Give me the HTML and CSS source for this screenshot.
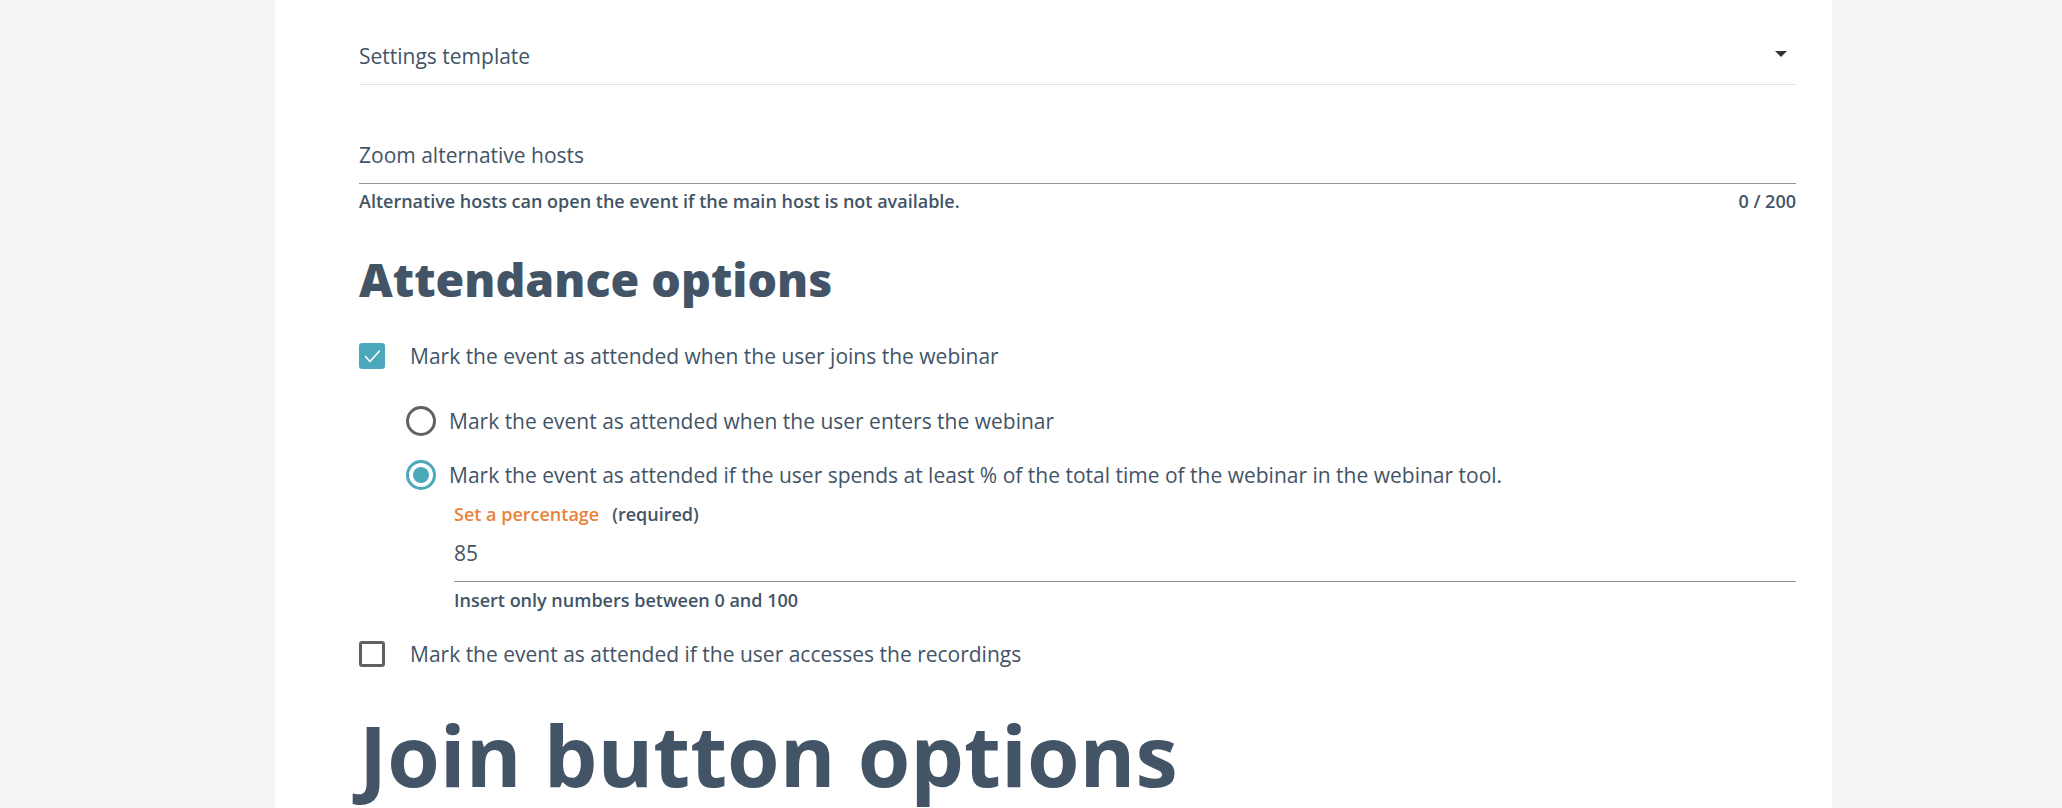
FILE: index.html
```html
<!DOCTYPE html>
<html lang="en">
<head>
<meta charset="utf-8">
<title>Attendance options</title>
<link rel="stylesheet" href="styles.css">
</head>
<body>
<div class="page">
  <main class="panel">
    <div class="select">
      <span>Settings template</span>
      <span class="caret"></span>
    </div>

    <div class="field">
      <div class="input">Zoom alternative hosts</div>
      <div class="hint">
        <span>Alternative hosts can open the event if the main host is not available.</span>
        <span>0 / 200</span>
      </div>
    </div>

    <h2 class="section-title">Attendance options</h2>

    <div class="check-row">
      <span class="checkbox checked">
        <svg viewBox="0 0 26 26" width="26" height="26"><polyline points="6.5,13.5 11,18.5 20.5,8" fill="none" stroke="#fff" stroke-width="1.6" stroke-linecap="round" stroke-linejoin="round"/></svg>
      </span>
      <span class="label">Mark the event as attended when the user joins the webinar</span>
    </div>

    <div class="radio-group">
      <div class="radio-row">
        <span class="radio"></span>
        <span class="label">Mark the event as attended when the user enters the webinar</span>
      </div>
      <div class="radio-row">
        <span class="radio on"></span>
        <span class="label">Mark the event as attended if the user spends at least % of the total time of the webinar in the webinar tool.</span>
      </div>
      <div class="pct">
        <div class="pct-label"><span class="accent">Set a percentage</span><span class="req">(required)</span></div>
        <div class="input pct-input">85</div>
        <div class="hint pct-hint"><span>Insert only numbers between 0 and 100</span></div>
      </div>
    </div>

    <div class="check-row second">
      <span class="checkbox"></span>
      <span class="label">Mark the event as attended if the user accesses the recordings</span>
    </div>

    <h1 class="big-title">Join button options</h1>
  </main>
</div>
</body>
</html>
```

FILE: styles.css
```css
html, body {
  margin: 0;
  padding: 0;
}

body {
  background: #f5f5f5;
  font-family: "Open Sans", "Noto Sans", sans-serif;
  color: #425466;
  height: 808px;
  overflow: hidden;
}

.page {
  display: flex;
}

.panel {
  margin-left: 275px;
  width: 1557px;
  min-height: 808px;
  box-sizing: border-box;
  background: #ffffff;
  padding: 28px 36px 0 84px;
}

.select {
  display: flex;
  justify-content: space-between;
  align-items: center;
  padding: 14px 9px 14px 0;
  border-bottom: 1px solid #e3e3e3;
  font-size: 21px;
  line-height: 28px;
}

.caret {
  width: 0;
  height: 0;
  border-left: 6px solid transparent;
  border-right: 6px solid transparent;
  border-top: 6px solid #333333;
  margin-top: -4px;
}

.field {
  margin-top: 42px;
}

.input {
  padding: 14px 0 14px;
  border-bottom: 1px solid #949494;
  font-size: 21px;
  line-height: 28px;
}

.hint {
  display: flex;
  justify-content: space-between;
  margin-top: 5px;
  font-size: 18px;
  line-height: 24px;
  font-weight: 600;
}

.section-title {
  margin: 39px 0 0;
  font-size: 46.5px;
  line-height: 55px;
  font-weight: 800;
}

.check-row {
  display: flex;
  align-items: center;
  margin-top: 35px;
  font-size: 21px;
  line-height: 28px;
}

.check-row.second {
  margin-top: 28px;
}

.checkbox {
  width: 26px;
  height: 26px;
  box-sizing: border-box;
  border: 3px solid #616161;
  border-radius: 3px;
  margin-right: 25px;
  flex: none;
}

.checkbox.checked {
  border: none;
  background: #4aa8ba;
}

.checkbox svg {
  display: block;
}

.radio-group {
  margin-left: 47px;
}

.radio-row {
  display: flex;
  align-items: center;
  margin-top: 24px;
  font-size: 21px;
  line-height: 28px;
  height: 30px;
}

.radio-row:first-child {
  margin-top: 36px;
}

.radio {
  width: 30px;
  height: 30px;
  box-sizing: border-box;
  border: 3px solid #616161;
  border-radius: 50%;
  margin-right: 13px;
  flex: none;
  display: flex;
  align-items: center;
  justify-content: center;
}

.radio.on {
  border-color: #4aa8ba;
}

.radio.on::after {
  content: "";
  width: 16px;
  height: 16px;
  border-radius: 50%;
  background: #4aa8ba;
}

.pct {
  margin-left: 48px;
  margin-top: 12px;
}

.pct-label {
  font-size: 18px;
  line-height: 24px;
  font-weight: 600;
}

.accent {
  color: #e8833a;
  margin-right: 13px;
}

.pct-input {
  padding-top: 13px;
}

.pct-hint {
  margin-top: 6px;
}

.big-title {
  margin: 35px 0 0;
  font-size: 85px;
  line-height: 102px;
  font-weight: 700;
}
```
